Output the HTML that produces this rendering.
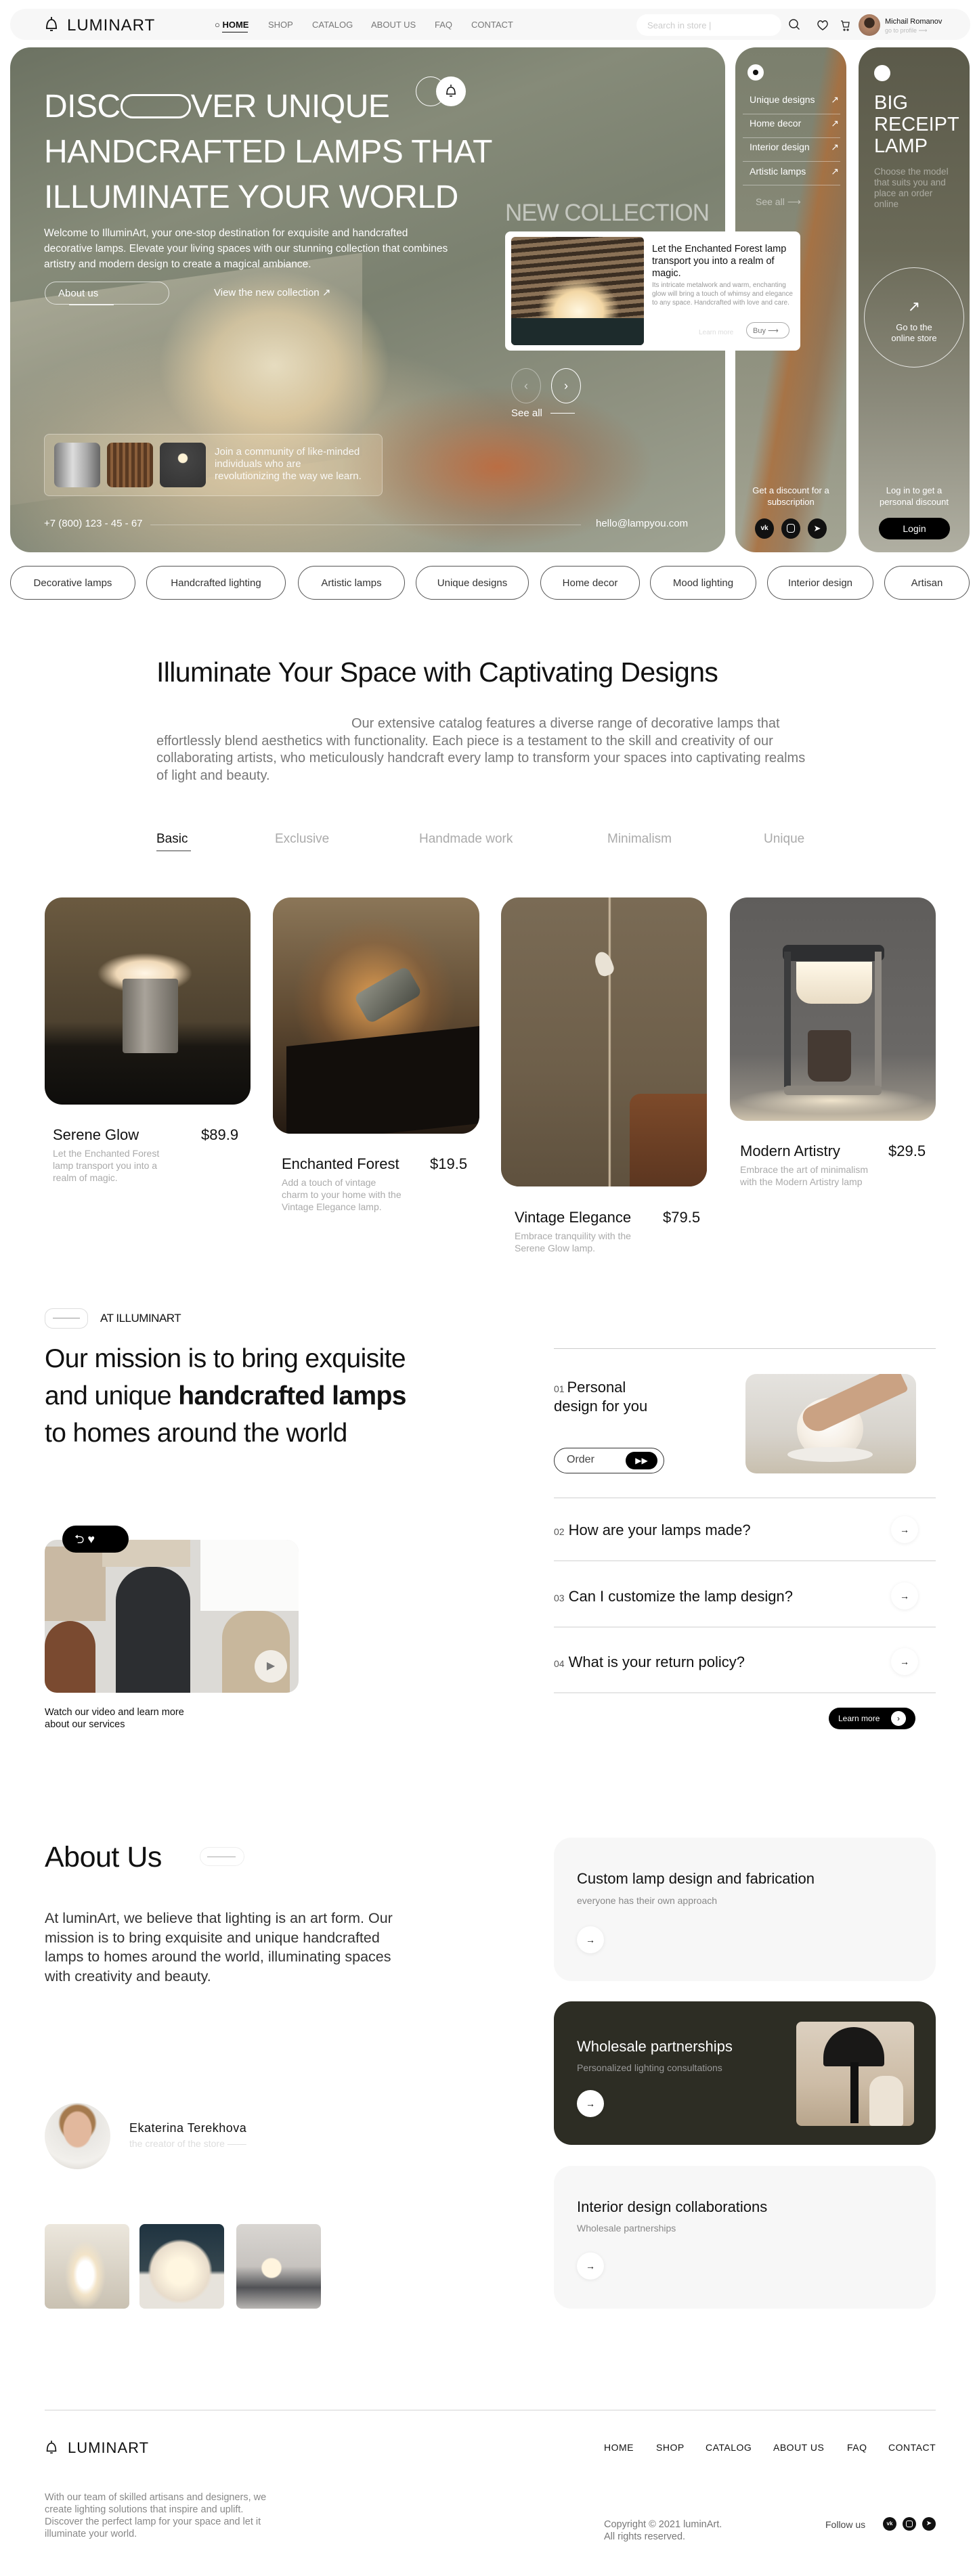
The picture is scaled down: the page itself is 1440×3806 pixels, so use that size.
<!DOCTYPE html>
<html><head><meta charset="utf-8"><style>
*{margin:0;padding:0;box-sizing:border-box}
body{width:1440px;height:3806px;position:relative;background:#fff;font-family:"Liberation Sans",sans-serif;color:#111;overflow:hidden}
.a{position:absolute}
.w{color:#fff}
.z{z-index:5}
.pill{position:absolute;border:1px solid #555;border-radius:26px;height:50px;top:836px;font-size:15px;color:#333;display:flex;align-items:center;justify-content:center}
.card{position:absolute;border-radius:26px;overflow:hidden}
.pt{position:absolute;font-size:22px;color:#111}
.pd{position:absolute;font-size:14px;color:#aaa;line-height:18px}
.q{position:absolute;left:818px;font-size:22px;color:#111}
.q small{font-size:14px;color:#555;margin-right:6px}
.sep{position:absolute;left:818px;width:564px;height:2px;background:#e6e6e6}
.arr{position:absolute;width:40px;height:40px;border-radius:50%;background:#fff;box-shadow:0 1px 6px rgba(0,0,0,.08);font-size:14px;display:flex;align-items:center;justify-content:center}
.fn{position:absolute;top:3608px;font-size:14px;letter-spacing:.5px;color:#111}
</style></head><body>

<!-- NAV -->
<div class="a" style="left:15px;top:13px;width:1418px;height:46px;border-radius:23px;background:#f7f7f7"></div>
<svg class="a" style="left:65px;top:23px" width="22" height="26" viewBox="0 0 22 26"><path d="M11 2v4M4 19c0-9 3-13 7-13s7 4 7 13z M3 19h16M9 22h4" fill="none" stroke="#111" stroke-width="1.8"/></svg>
<div class="a" style="left:99px;top:24px;font-size:24px;letter-spacing:1px">LUMINART</div>
<div class="a" style="left:317px;top:29px;font-size:13px;font-weight:bold">○ HOME</div>
<div class="a" style="left:328px;top:47px;width:38px;height:1px;background:#111"></div>
<div class="a" style="left:396px;top:29px;font-size:13px;color:#777">SHOP</div>
<div class="a" style="left:461px;top:29px;font-size:13px;color:#777">CATALOG</div>
<div class="a" style="left:548px;top:29px;font-size:13px;color:#777">ABOUT US</div>
<div class="a" style="left:642px;top:29px;font-size:13px;color:#777">FAQ</div>
<div class="a" style="left:696px;top:29px;font-size:13px;color:#777">CONTACT</div>
<div class="a" style="left:940px;top:21px;width:214px;height:32px;border-radius:16px;background:#fff"></div>
<div class="a" style="left:956px;top:30px;font-size:13px;color:#ccc">Search in store |</div>
<svg class="a" style="left:1164px;top:27px" width="18" height="18"><circle cx="8" cy="8" r="6" fill="none" stroke="#222" stroke-width="1.4"/><path d="M12.5 12.5l4 4" stroke="#222" stroke-width="1.4"/></svg>
<svg class="a" style="left:1206px;top:28px" width="18" height="18"><path d="M9 16C2 11 1 8 2.5 5S7 2 9 5c2-3 5-3 6.5 0S16 11 9 16z" fill="none" stroke="#222" stroke-width="1.4"/></svg>
<svg class="a" style="left:1240px;top:28px" width="16" height="18"><path d="M2 3h2l2 9h7l1-7H5M7 15a1 1 0 1 0 .1 0M12 15a1 1 0 1 0 .1 0" fill="none" stroke="#222" stroke-width="1.3"/></svg>
<div class="a" style="left:1268px;top:21px;width:32px;height:32px;border-radius:50%;background:radial-gradient(circle at 50% 40%,#3a2a20 30%,#b5876a 32%,#8a6450)"></div>
<div class="a" style="left:1307px;top:26px;font-size:11px">Michail Romanov</div>
<div class="a" style="left:1307px;top:40px;font-size:9px;color:#bbb">go to profile ⟶</div>

<!-- HERO MAIN -->
<div class="card" style="left:15px;top:70px;width:1056px;height:746px;border-radius:30px;background:
radial-gradient(ellipse 170px 140px at 390px 470px,rgba(255,243,210,.97),rgba(255,225,170,.7) 55%,rgba(230,190,130,0) 100%),
radial-gradient(ellipse 230px 120px at 720px 620px,rgba(190,105,60,.9),rgba(160,90,50,.3) 60%,rgba(0,0,0,0)),
radial-gradient(ellipse 420px 200px at 350px 620px,rgba(225,200,160,.8),rgba(200,180,150,0)),
linear-gradient(160deg,#6c7262 0%,#868b79 30%,#7b8170 50%,#8e9180 75%,#9fa393 100%)">
 <div class="a" style="left:0;top:340px;width:520px;height:300px;background:linear-gradient(170deg,rgba(200,195,175,.5),rgba(160,150,130,.2));transform:skewY(-8deg)"></div>
</div>
<div class="a w" style="left:65px;top:124px;font-size:48px;line-height:67px;letter-spacing:-.5px">DISC<span style="display:inline-block;width:104px;height:36px;border:3px solid #fff;border-radius:18px;vertical-align:-2px"></span>VER UNIQUE<br>HANDCRAFTED LAMPS THAT<br>ILLUMINATE YOUR WORLD</div>
<div class="a" style="left:614px;top:113px;width:44px;height:44px;border:1.5px solid #fff;border-radius:50%"></div>
<div class="a" style="left:644px;top:113px;width:44px;height:44px;background:#fff;border-radius:50%"></div>
<svg class="a" style="left:657px;top:123px" width="18" height="22"><path d="M9 2v3M3 16c0-7 2.5-10 6-10s6 3 6 10zM2 16h14M7 19h4" fill="none" stroke="#111" stroke-width="1.5"/></svg>
<div class="a" style="left:746px;top:295px;font-size:35px;color:rgba(255,255,255,.55);letter-spacing:-1px;white-space:nowrap">NEW COLLECTION</div>
<div class="a w" style="left:65px;top:333px;font-size:15.5px;line-height:23px;width:600px">Welcome to IlluminArt, your one-stop destination for exquisite and handcrafted decorative lamps. Elevate your living spaces with our stunning collection that combines artistry and modern design to create a magical ambiance.</div>
<div class="a w" style="left:66px;top:416px;width:184px;height:34px;border:1px solid rgba(255,255,255,.7);border-radius:17px;font-size:15px;padding:8px 19px">About us <span style="display:inline-block;width:66px;height:1px;background:#fff;vertical-align:4px;margin-left:16px"></span></div>
<div class="a w" style="left:316px;top:423px;font-size:15px">View the new collection ↗</div>

<div class="a" style="left:755px;top:544px;width:44px;height:52px;border:1px solid rgba(255,255,255,.4);border-radius:50%;color:rgba(255,255,255,.5);font-size:18px;text-align:center;line-height:50px">‹</div>
<div class="a" style="left:814px;top:544px;width:44px;height:52px;border:1.5px solid #fff;border-radius:50%;color:#fff;font-size:18px;text-align:center;line-height:50px">›</div>
<div class="a w" style="left:755px;top:602px;font-size:15px">See all <span style="display:inline-block;width:36px;height:1px;background:#fff;vertical-align:4px;margin-left:8px"></span></div>
<div class="a" style="left:65px;top:641px;width:500px;height:92px;border:1px solid rgba(255,255,255,.35);border-radius:8px;background:rgba(255,235,200,.22)"></div>
<div class="a" style="left:80px;top:654px;width:68px;height:66px;border-radius:8px;background:linear-gradient(90deg,#777,#ddd 40%,#aaa 70%,#666)"></div>
<div class="a" style="left:158px;top:654px;width:68px;height:66px;border-radius:8px;background:repeating-linear-gradient(90deg,#5a3a22 0 5px,#8a5e3a 5px 9px)"></div>
<div class="a" style="left:236px;top:654px;width:68px;height:66px;border-radius:8px;background:radial-gradient(circle at 50% 35%,#fff3d5 12%,#444 14%,#333)"></div>
<div class="a" style="left:317px;top:659px;font-size:15px;line-height:18px;width:220px;color:rgba(255,255,255,.9)">Join a community of like-minded individuals who are revolutionizing the way we learn.</div>
<div class="a w" style="left:65px;top:765px;font-size:15px">+7 (800) 123 - 45 - 67</div>
<div class="a" style="left:222px;top:775px;width:636px;height:1px;background:rgba(255,255,255,.35)"></div>
<div class="a w" style="left:880px;top:765px;font-size:15px">hello@lampyou.com</div>

<!-- HERO CARD 2 -->
<div class="card" style="left:1086px;top:70px;width:164px;height:746px;border-radius:30px;background:
linear-gradient(100deg,rgba(0,0,0,0) 45%,rgba(170,110,60,.85) 55%,rgba(150,100,60,.6) 70%,rgba(0,0,0,0) 85%),
linear-gradient(180deg,#7b7f6d,#8a8c7a 50%,#a3a493)"></div>
<div class="a" style="left:1104px;top:95px;width:24px;height:24px;border-radius:50%;background:#fff"></div>
<div class="a" style="left:1112px;top:103px;width:8px;height:8px;border-radius:50%;background:#111"></div>
<div class="a w" style="left:1107px;top:139px;font-size:14px;width:132px">Unique designs<span style="float:right">↗</span></div>
<div class="a" style="left:1097px;top:168px;width:144px;height:1px;background:rgba(255,255,255,.4)"></div>
<div class="a w" style="left:1107px;top:174px;font-size:14px;width:132px">Home decor<span style="float:right">↗</span></div>
<div class="a" style="left:1097px;top:203px;width:144px;height:1px;background:rgba(255,255,255,.4)"></div>
<div class="a w" style="left:1107px;top:209px;font-size:14px;width:132px">Interior design<span style="float:right">↗</span></div>
<div class="a" style="left:1097px;top:238px;width:144px;height:1px;background:rgba(255,255,255,.4)"></div>
<div class="a w" style="left:1107px;top:245px;font-size:14px;width:132px">Artistic lamps<span style="float:right">↗</span></div>
<div class="a" style="left:1097px;top:273px;width:144px;height:1px;background:rgba(255,255,255,.4)"></div>
<div class="a" style="left:1116px;top:290px;font-size:14px;color:rgba(255,255,255,.5)">See all ⟶</div>
<div class="a w" style="left:1092px;top:716px;width:152px;text-align:center;font-size:13px;line-height:17px">Get a discount for a subscription</div>
<div class="a" style="left:1115px;top:766px;width:28px;height:30px;border-radius:50%;background:#111;color:#fff;font-size:10px;font-weight:bold;text-align:center;line-height:30px">vk</div>
<div class="a" style="left:1154px;top:766px;width:28px;height:30px;border-radius:50%;background:#111"><div style="margin:8px;width:12px;height:13px;border:1.5px solid #fff;border-radius:4px"></div></div>
<div class="a" style="left:1193px;top:766px;width:28px;height:30px;border-radius:50%;background:#111;color:#fff;font-size:13px;text-align:center;line-height:30px">➤</div>

<!-- white product card (on top) -->
<div class="a z" style="left:746px;top:342px;width:436px;height:176px;background:#fff;border-radius:8px"></div>
<div class="a z" style="left:755px;top:350px;width:196px;height:160px;border-radius:6px;overflow:hidden;background:
radial-gradient(ellipse 60px 50px at 100px 110px,#fff7e0,#f3d7a5 60%,rgba(0,0,0,0) 100%),
repeating-linear-gradient(175deg,#8a7156 0 6px,#3b2e22 6px 12px)"><div class="a" style="left:0;top:120px;width:196px;height:40px;background:#1d2b2c"></div></div>
<div class="a z" style="left:963px;top:359px;font-size:14.5px;line-height:18px;width:210px;color:#111">Let the Enchanted Forest lamp transport you into a realm of magic.</div>
<div class="a z" style="left:963px;top:415px;font-size:10px;line-height:13px;width:210px;color:#999">Its intricate metalwork and warm, enchanting glow will bring a touch of whimsy and elegance to any space. Handcrafted with love and care.</div>
<div class="a z" style="left:1032px;top:486px;font-size:10px;color:#ddd">Learn more</div>
<div class="a z" style="left:1102px;top:476px;width:64px;height:24px;border:1px solid #aaa;border-radius:12px;font-size:11px;color:#777;padding:5px 9px">Buy ⟶</div>

<!-- HERO CARD 3 -->
<div class="card" style="left:1268px;top:70px;width:164px;height:746px;border-radius:30px;background:linear-gradient(180deg,#5b5a4a,#6b6a58 40%,#8b8a7b 70%,#b0afa2)"></div>
<div class="a" style="left:1291px;top:96px;width:24px;height:24px;border-radius:50%;background:#fff"></div>
<div class="a w" style="left:1291px;top:136px;font-size:29px;line-height:32px">BIG<br>RECEIPT<br>LAMP</div>
<div class="a" style="left:1291px;top:246px;font-size:13.5px;line-height:16px;width:120px;color:rgba(255,255,255,.45)">Choose the model that suits you and place an order online</div>
<div class="a" style="left:1276px;top:395px;width:148px;height:148px;border:1px solid rgba(255,255,255,.8);border-radius:50%"></div>
<div class="a w" style="left:1276px;top:440px;width:148px;text-align:center;font-size:22px">↗</div>
<div class="a w" style="left:1276px;top:476px;width:148px;text-align:center;font-size:13px;line-height:16px">Go to the<br>online store</div>
<div class="a w" style="left:1276px;top:716px;width:148px;text-align:center;font-size:13px;line-height:17px">Log in to get a<br>personal discount</div>
<div class="a" style="left:1298px;top:765px;width:105px;height:32px;border-radius:16px;background:#000;color:#fff;font-size:14px;text-align:center;line-height:32px">Login</div>

<!-- CHIPS -->
<div class="pill" style="left:15px;width:185px">Decorative lamps</div>
<div class="pill" style="left:216px;width:206px">Handcrafted lighting</div>
<div class="pill" style="left:440px;width:158px">Artistic lamps</div>
<div class="pill" style="left:614px;width:167px">Unique designs</div>
<div class="pill" style="left:798px;width:147px">Home decor</div>
<div class="pill" style="left:960px;width:157px">Mood lighting</div>
<div class="pill" style="left:1133px;width:157px">Interior design</div>
<div class="pill" style="left:1306px;width:126px">Artisan</div>

<!-- CATALOG -->
<div class="a" style="left:231px;top:970px;font-size:41px;letter-spacing:-.6px;white-space:nowrap">Illuminate Your Space with Captivating Designs</div>
<div class="a" style="left:231px;top:1057px;width:975px;font-size:20px;line-height:25.5px;color:#777;text-indent:288px">Our extensive catalog features a diverse range of decorative lamps that effortlessly blend aesthetics with functionality. Each piece is a testament to the skill and creativity of our collaborating artists, who meticulously handcraft every lamp to transform your spaces into captivating realms of light and beauty.</div>
<div class="a" style="left:231px;top:1229px;font-size:19px">Basic</div>
<div class="a" style="left:231px;top:1256px;width:51px;height:2px;background:#999"></div>
<div class="a" style="left:406px;top:1229px;font-size:19px;color:#aaa">Exclusive</div>
<div class="a" style="left:619px;top:1229px;font-size:19px;color:#aaa">Handmade work</div>
<div class="a" style="left:897px;top:1229px;font-size:19px;color:#aaa">Minimalism</div>
<div class="a" style="left:1128px;top:1229px;font-size:19px;color:#aaa">Unique</div>

<div class="card" style="left:66px;top:1326px;width:304px;height:306px;background:
radial-gradient(ellipse 70px 30px at 148px 112px,#fff6e6,#f0d9b8 60%,rgba(0,0,0,0) 100%),
linear-gradient(180deg,#6b5a40 0%,#4e4230 60%,#1a1712 72%,#0e0d0b 100%)">
<div class="a" style="left:115px;top:120px;width:82px;height:110px;border-radius:4px;background:linear-gradient(90deg,#6e6a62,#a9a39a 40%,#6a665e)"></div></div>
<div class="pt" style="left:78px;top:1664px">Serene Glow</div><div class="pt" style="left:297px;top:1664px">$89.9</div>
<div class="pd" style="left:78px;top:1695px;width:170px">Let the Enchanted Forest lamp transport you into a realm of magic.</div>

<div class="card" style="left:403px;top:1326px;width:305px;height:349px;background:
radial-gradient(ellipse 120px 120px at 150px 150px,rgba(235,165,85,.9),rgba(160,100,50,.3) 70%,rgba(0,0,0,0)),
linear-gradient(180deg,#8b7658,#5f4a32 50%,#241a12)">
<div class="a" style="left:20px;top:205px;width:285px;height:144px;background:#120e0b;transform:skewY(-6deg)"></div>
<div class="a" style="left:125px;top:120px;width:90px;height:48px;border-radius:10px;background:linear-gradient(160deg,#8e8f83,#4d4f47);transform:rotate(-30deg)"></div></div>
<div class="pt" style="left:416px;top:1707px">Enchanted Forest</div><div class="pt" style="left:635px;top:1707px">$19.5</div>
<div class="pd" style="left:416px;top:1738px;width:180px">Add a touch of vintage charm to your home with the Vintage Elegance lamp.</div>

<div class="card" style="left:740px;top:1326px;width:304px;height:427px;background:
linear-gradient(90deg,rgba(0,0,0,0) 52%,#c9b89e 52.5%,#c9b89e 53%,rgba(0,0,0,0) 53.5%),
linear-gradient(180deg,#7a6b55,#6e5f4a 60%,#5f513e)">
<div class="a" style="left:190px;top:290px;width:114px;height:137px;border-radius:16px 0 0 0;background:linear-gradient(180deg,#7d4a2a,#5c3620)"></div>
<div class="a" style="left:140px;top:80px;width:24px;height:36px;border-radius:50% 50% 10px 10px;background:#e9e2d5;transform:rotate(-20deg)"></div></div>
<div class="pt" style="left:760px;top:1786px">Vintage Elegance</div><div class="pt" style="left:979px;top:1786px">$79.5</div>
<div class="pd" style="left:760px;top:1817px;width:190px">Embrace tranquility with the Serene Glow lamp.</div>

<div class="card" style="left:1078px;top:1326px;width:304px;height:330px;background:
radial-gradient(ellipse 140px 20px at 150px 300px,#f0e4cc,rgba(0,0,0,0)),
linear-gradient(180deg,#5f5d5b,#6a6866 70%,#8d8880 90%,#cfc3ad)">
<div class="a" style="left:78px;top:70px;width:150px;height:24px;border-radius:8px;background:#2e2f31"></div>
<div class="a" style="left:80px;top:80px;width:10px;height:200px;background:#3b3c3d"></div>
<div class="a" style="left:214px;top:80px;width:10px;height:200px;background:#8f8a83"></div>
<div class="a" style="left:98px;top:95px;width:112px;height:62px;border-radius:0 0 22px 22px;background:linear-gradient(180deg,#fff8e8,#e9dcc5)"></div>
<div class="a" style="left:115px;top:196px;width:64px;height:76px;border-radius:6px 6px 14px 14px;background:#453a33"></div>
<div class="a" style="left:80px;top:278px;width:144px;height:14px;border-radius:6px;background:#8a857d"></div></div>
<div class="pt" style="left:1093px;top:1688px">Modern Artistry</div><div class="pt" style="left:1312px;top:1688px">$29.5</div>
<div class="pd" style="left:1093px;top:1719px;width:190px">Embrace the art of minimalism with the Modern Artistry lamp</div>

<!-- MISSION -->
<div class="a" style="left:66px;top:1933px;width:64px;height:30px;border:1px solid #ddd;border-radius:12px"></div>
<div class="a" style="left:78px;top:1947px;width:40px;height:1px;background:#999"></div>
<div class="a" style="left:148px;top:1938px;font-size:17px;letter-spacing:-.5px">AT ILLUMINART</div>
<div class="a" style="left:66px;top:1980px;font-size:39px;line-height:55px;letter-spacing:-.6px;width:720px">Our mission is to bring exquisite<br>and unique <b>handcrafted lamps</b><br>to homes around the world</div>

<div class="sep" style="top:1992px;height:1px;background:#ccc"></div>
<div class="a" style="left:818px;top:2037px;font-size:22px;line-height:26px"><span style="font-size:14px;color:#555">01 </span>Personal<br>design for you</div>
<div class="a" style="left:1101px;top:2030px;width:252px;height:147px;border-radius:16px;overflow:hidden;background:linear-gradient(180deg,#e5e3df,#d7d3cc 60%,#c8bfae)">
<div class="a" style="left:76px;top:35px;width:98px;height:92px;border-radius:50%;background:radial-gradient(circle at 45% 35%,#fff,#f6efe5 50%,#d9d0c3)"></div>
<div class="a" style="left:62px;top:108px;width:126px;height:22px;border-radius:50%;background:#efece7"></div>
<div class="a" style="left:80px;top:20px;width:160px;height:40px;border-radius:30px 20px 10px 40px;background:#caa283;transform:rotate(-25deg)"></div></div>
<div class="a" style="left:818px;top:2139px;width:163px;height:38px;border:1px solid #333;border-radius:19px"></div>
<div class="a" style="left:837px;top:2148px;font-size:16px;color:#444">Order</div>
<div class="a" style="left:924px;top:2145px;width:47px;height:26px;border-radius:13px;background:#000;color:#fff;font-size:12px;text-align:center;line-height:26px">▶▶</div>
<div class="sep" style="top:2212px"></div>
<div class="q" style="top:2248px"><small>02</small>How are your lamps made?</div>
<div class="arr" style="left:1316px;top:2240px">→</div>
<div class="sep" style="top:2305px"></div>
<div class="q" style="top:2346px"><small>03</small>Can I customize the lamp design?</div>
<div class="arr" style="left:1316px;top:2338px">→</div>
<div class="sep" style="top:2403px"></div>
<div class="q" style="top:2443px"><small>04</small>What is your return policy?</div>
<div class="arr" style="left:1316px;top:2435px">→</div>
<div class="sep" style="top:2500px"></div>
<div class="a" style="left:1224px;top:2523px;width:128px;height:32px;border-radius:16px;background:#000;color:#fff;font-size:12px;padding:9px 14px">Learn more</div>
<div class="a" style="left:1316px;top:2528px;width:22px;height:22px;border-radius:50%;background:#fff;color:#000;font-size:12px;text-align:center;line-height:22px">›</div>

<div class="a" style="left:66px;top:2275px;width:375px;height:226px;border-radius:18px;overflow:hidden;background:#dcdad6">
<div class="a" style="left:0;top:10px;width:90px;height:110px;background:#c9b9a3"></div>
<div class="a" style="left:0;top:120px;width:75px;height:106px;border-radius:40px 40px 0 0;background:#7a4a30"></div>
<div class="a" style="left:85px;top:0;width:130px;height:40px;background:#d8cdbb"></div>
<div class="a" style="left:105px;top:40px;width:110px;height:186px;border-radius:50px 50px 0 0;background:#2c2e31"></div>
<div class="a" style="left:230px;top:0;width:145px;height:105px;background:#fbfbfa"></div>
<div class="a" style="left:262px;top:105px;width:100px;height:121px;border-radius:40px 40px 0 0;background:#c8b79c"></div>
<div class="a" style="left:310px;top:163px;width:48px;height:48px;border-radius:50%;background:rgba(255,255,255,.75);color:#777;font-size:16px;text-align:center;line-height:48px">▶</div></div>
<div class="a" style="left:92px;top:2254px;width:98px;height:40px;border-radius:20px;background:#000;color:#fff;font-size:18px;padding:8px 18px">⮌ ♥</div>
<div class="a" style="left:66px;top:2521px;font-size:14.5px;line-height:18px;width:220px">Watch our video and learn more about our services</div>

<!-- ABOUT -->
<div class="a" style="left:66px;top:2720px;font-size:43px;letter-spacing:-.5px">About Us</div>
<div class="a" style="left:295px;top:2729px;width:66px;height:28px;border:1px solid #eee;border-radius:14px"></div>
<div class="a" style="left:306px;top:2743px;width:42px;height:1px;background:#aaa"></div>
<div class="a" style="left:66px;top:2820px;font-size:21.5px;line-height:28.5px;color:#333;width:545px">At luminArt, we believe that lighting is an art form. Our mission is to bring exquisite and unique handcrafted lamps to homes around the world, illuminating spaces with creativity and beauty.</div>
<div class="a" style="left:66px;top:3107px;width:97px;height:98px;border-radius:50%;background:radial-gradient(ellipse 22px 28px at 50% 40%,#e2b89d 90%,rgba(0,0,0,0)),radial-gradient(circle at 50% 30%,#a57a4e 30%,#e8e6e2 34%,#f2f0ec 70%,#cfcac2)"></div>
<div class="a" style="left:191px;top:3134px;font-size:18px;letter-spacing:.5px">Ekaterina Terekhova</div>
<div class="a" style="left:191px;top:3159px;font-size:14px;color:#ddd">the creator of the store ——</div>
<div class="a" style="left:66px;top:3286px;width:125px;height:125px;border-radius:8px;background:radial-gradient(ellipse 30px 50px at 60px 75px,#fff 40%,#f3e4c8 60%,rgba(0,0,0,0)),linear-gradient(180deg,#ece7dd,#c9c1b2)"></div>
<div class="a" style="left:206px;top:3286px;width:125px;height:125px;border-radius:8px;background:radial-gradient(circle at 60px 70px,#fff6e0 20%,#e8dccb 45%,rgba(0,0,0,0) 50%),linear-gradient(180deg,#1f3340,#36474f 55%,#e7e3dc 60%)"></div>
<div class="a" style="left:349px;top:3286px;width:125px;height:125px;border-radius:8px;background:radial-gradient(circle at 52px 65px,#fff4de 14%,rgba(0,0,0,0) 16%),linear-gradient(180deg,#d9d6d2,#c7c3bf 50%,#515256 75%,#b8b5b2)"></div>

<div class="a" style="left:818px;top:2715px;width:564px;height:212px;border-radius:26px;background:#f7f7f7"></div>
<div class="a" style="left:852px;top:2763px;font-size:22px">Custom lamp design and fabrication</div>
<div class="a" style="left:852px;top:2800px;font-size:14px;color:#888">everyone has their own approach</div>
<div class="arr" style="left:852px;top:2846px">→</div>

<div class="a" style="left:818px;top:2957px;width:564px;height:212px;border-radius:26px;background:#2d2d24"></div>
<div class="a w" style="left:852px;top:3011px;font-size:22px">Wholesale partnerships</div>
<div class="a" style="left:852px;top:3047px;font-size:14px;color:#999">Personalized lighting consultations</div>
<div class="arr" style="left:852px;top:3088px;color:#000">→</div>
<div class="a" style="left:1176px;top:2987px;width:174px;height:154px;border-radius:8px;overflow:hidden;background:linear-gradient(180deg,#dcd0c0,#cdbca6 60%,#b8a58c)">
<div class="a" style="left:40px;top:8px;width:90px;height:58px;border-radius:45px 45px 4px 4px;background:#191817"></div>
<div class="a" style="left:80px;top:60px;width:12px;height:90px;background:#111"></div>
<div class="a" style="left:108px;top:80px;width:50px;height:74px;border-radius:20px 20px 4px 4px;background:#ece3d5"></div></div>

<div class="a" style="left:818px;top:3200px;width:564px;height:211px;border-radius:26px;background:#f7f7f7"></div>
<div class="a" style="left:852px;top:3248px;font-size:22px">Interior design collaborations</div>
<div class="a" style="left:852px;top:3284px;font-size:14px;color:#888">Wholesale partnerships</div>
<div class="arr" style="left:852px;top:3328px">→</div>

<!-- FOOTER -->
<div class="a" style="left:66px;top:3560px;width:1316px;height:2px;background:#e8e8e8"></div>
<svg class="a" style="left:66px;top:3604px" width="20" height="24" viewBox="0 0 22 26"><path d="M11 2v4M4 19c0-9 3-13 7-13s7 4 7 13z M3 19h16M9 22h4" fill="none" stroke="#111" stroke-width="1.8"/></svg>
<div class="a" style="left:100px;top:3604px;font-size:22px;letter-spacing:1px">LUMINART</div>
<div class="fn" style="left:892px">HOME</div>
<div class="fn" style="left:969px">SHOP</div>
<div class="fn" style="left:1042px">CATALOG</div>
<div class="fn" style="left:1142px">ABOUT US</div>
<div class="fn" style="left:1251px">FAQ</div>
<div class="fn" style="left:1312px">CONTACT</div>
<div class="a" style="left:66px;top:3681px;font-size:14.5px;line-height:18px;color:#888;width:330px">With our team of skilled artisans and designers, we create lighting solutions that inspire and uplift. Discover the perfect lamp for your space and let it illuminate your world.</div>
<div class="a" style="left:892px;top:3721px;font-size:14.5px;line-height:18px;color:#777">Copyright © 2021 luminArt.<br>All rights reserved.</div>
<div class="a" style="left:1219px;top:3722px;font-size:14px;color:#444">Follow us</div>
<div class="a" style="left:1304px;top:3719px;width:20px;height:20px;border-radius:50%;background:#111;color:#fff;font-size:8px;font-weight:bold;text-align:center;line-height:20px">vk</div>
<div class="a" style="left:1333px;top:3719px;width:20px;height:20px;border-radius:50%;background:#111"><div style="margin:5px;width:10px;height:10px;border:1.5px solid #fff;border-radius:3px"></div></div>
<div class="a" style="left:1362px;top:3719px;width:20px;height:20px;border-radius:50%;background:#111;color:#fff;font-size:10px;text-align:center;line-height:20px">➤</div>
</body></html>
